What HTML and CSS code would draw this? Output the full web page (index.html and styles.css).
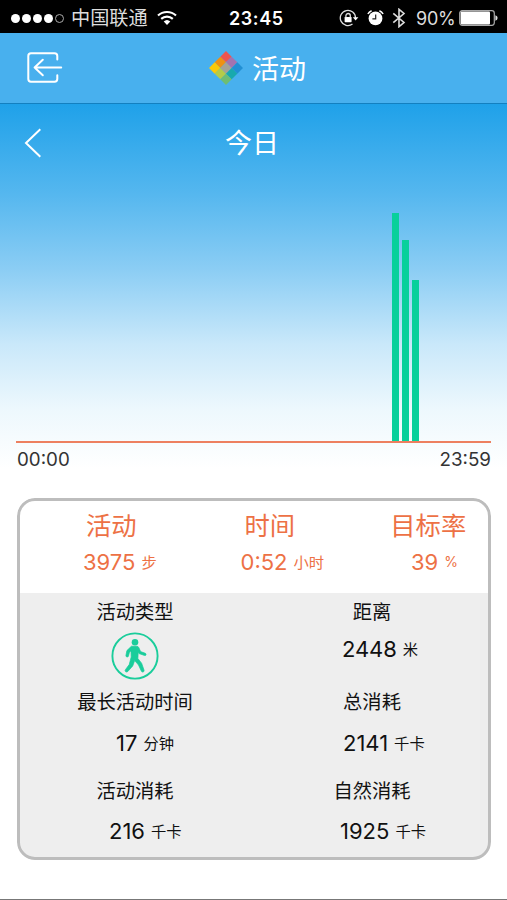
FILE: index.html
```html
<!DOCTYPE html>
<html lang="zh-CN">
<head>
<meta charset="utf-8">
<title>活动</title>
<link rel="stylesheet" href="styles.css">
</head>
<body>
<div class="screen">
  <header class="status">
    <div class="carrier">
      <div class="dots"><i></i><i></i><i></i><i></i><i class="empty"></i></div>
      <span class="carrier-name">中国联通</span>
      <svg class="wifi" width="20" height="16" viewBox="0 0 20 16" fill="none" stroke="#fff" stroke-width="2.1">
        <path d="M1 5.6A13 13 0 0 1 19 5.6M4.2 8.9A8.6 8.6 0 0 1 15.8 8.9"/>
        <path d="M6.7 11.5A4.8 4.8 0 0 1 13.3 11.5L10 15Z" fill="#fff" stroke="none"/>
      </svg>
    </div>
    <span class="clock">23:45</span>
    <div class="indicators">
      <svg width="20" height="18" viewBox="0 0 20 18" fill="none" stroke="#ddd" stroke-width="1.3">
        <path d="M16.5 9A7.6 7.6 0 1 0 13.5 15"/>
        <path d="M13.8 8.3H19.4L16.6 11.4Z" fill="#fff" stroke="none"/>
        <rect x="5.6" y="8" width="7" height="5.2" rx=".6" fill="#fff" stroke="none"/>
        <path d="M6.9 8.5V6.7a2.2 2.2 0 0 1 4.4 0V8.5"/>
      </svg>
      <svg class="alarm" width="17" height="18" viewBox="0 0 17 18" fill="none" stroke="#fff">
        <circle cx="8.5" cy="9.4" r="6.9" fill="#fff" stroke="none"/>
        <path d="M.9 5A7 7 0 0 1 4.6 1.7M16.1 5A7 7 0 0 0 12.4 1.7" stroke-width="1.5"/>
        <path d="M8.7 5.5V9.8H5.4" stroke="#222" stroke-width="1.2"/>
      </svg>
      <svg class="bluetooth" width="14" height="20" viewBox="0 0 14 20" fill="none" stroke="#ddd" stroke-width="1.6">
        <path d="M1.3 5.3L12 14.5L7 18.7V1.3L12 5.5L1.3 14.7"/>
      </svg>
      <span class="percent">90%</span>
      <svg class="battery" width="39" height="16" viewBox="0 0 39 16">
        <rect x=".7" y=".7" width="34.6" height="14.6" rx="2.5" fill="none" stroke="#aaa" stroke-width="1.2"/>
        <rect x="1.6" y="1.6" width="29.4" height="12.8" rx="1" fill="#fff"/>
        <path d="M36.4 5.2Q38.6 6 38.6 8T36.4 10.8Z" fill="#ddd"/>
      </svg>
    </div>
  </header>

  <nav class="navbar">
    <svg class="exit" width="36" height="32" viewBox="0 0 36 32" fill="none" stroke="#fff" stroke-width="2" stroke-linecap="round" stroke-linejoin="round">
      <path d="M30.3 7.6V4Q30.3 1.3 27.5 1.3H4Q1.3 1.3 1.3 4V27Q1.3 29.7 4 29.7H27.5Q30.3 29.7 30.3 27V23.3"/>
      <path d="M34.2 15.5H7.6M15.8 7.8L7.6 15.5L15.8 23.2"/>
    </svg>
    <svg class="logo" width="34" height="34" viewBox="0 0 34 34">
      <g transform="translate(17 0) rotate(45)">
        <rect width="8" height="8" fill="#ed5550"/>
        <rect x="8" width="8" height="8" fill="#a273b0"/>
        <rect x="16" width="8" height="8" fill="#218fd3"/>
        <rect y="8" width="8" height="8" fill="#ef9112"/>
        <rect x="8" y="8" width="8" height="8" fill="#a5a295"/>
        <rect x="16" y="8" width="8" height="8" fill="#18a9ae"/>
        <rect y="16" width="8" height="8" fill="#fbc908"/>
        <rect x="8" y="16" width="8" height="8" fill="#b5cb48"/>
        <rect x="16" y="16" width="8" height="8" fill="#6ebd73"/>
      </g>
    </svg>
    <h1 class="title">活动</h1>
  </nav>

  <section class="chart">
    <div class="day">
      <svg class="prev" width="18" height="30" viewBox="0 0 18 30" fill="none" stroke="#fff" stroke-width="2"><path d="M16.3 1.3L2 15L16.3 28.7"/></svg>
      <h2 class="title">今日</h2>
    </div>
    <div class="plot">
      <div class="bar" style="height:228px"></div>
      <div class="bar" style="height:201px"></div>
      <div class="bar" style="height:161px"></div>
    </div>
    <div class="axis"><span>00:00</span><span>23:59</span></div>
  </section>

  <main class="card">
    <div class="summary">
      <div class="metric">
        <div class="name">活动</div>
        <div class="value steps"><span class="num">3975</span><span class="unit">步</span></div>
      </div>
      <div class="metric">
        <div class="name">时间</div>
        <div class="value time"><span class="num">0:52</span><span class="unit">小时</span></div>
      </div>
      <div class="metric">
        <div class="name">目标率</div>
        <div class="value goal"><span class="num">39</span><span class="unit sign">%</span></div>
      </div>
    </div>
    <div class="details">
      <div class="cell">
        <div class="label">活动类型</div>
        <svg class="walk" width="48" height="48" viewBox="0 0 48 48" fill="#1acd9b">
          <circle cx="24" cy="24" r="22.6" fill="none" stroke="#1acd9b" stroke-width="1.9"/>
          <circle cx="24" cy="10.2" r="3.3"/>
          <path stroke="#1acd9b" stroke-width=".7" d="M20.4 14.2H25.8Q27.2 14.2 27.8 15.6L29.6 19.6L34.4 21.3Q35.5 21.9 35 22.9Q34.5 23.8 33.4 23.4L28 21.6L27.2 20.2L26.9 26.5L30.6 31.2L33.1 38.3Q33.2 39.9 31.9 40.1Q30.8 40.2 30.3 39.1L27.5 33L23.7 28.6L21.7 34L16.8 39.5Q15.7 40.5 14.5 39.6Q13.7 38.7 14.4 37.7L18.2 32.6L20.2 25L20 18.8L18.4 20.4L17.4 24.3Q17 25.2 16 25Q14.8 24.7 14.9 23.6L15.9 18.6Z"/>
        </svg>
      </div>
      <div class="cell">
        <div class="label">距离</div>
        <div class="value distance"><span class="num">2448</span><span class="unit">米</span></div>
      </div>
      <div class="cell">
        <div class="label">最长活动时间</div>
        <div class="value longest"><span class="num">17</span><span class="unit">分钟</span></div>
      </div>
      <div class="cell">
        <div class="label">总消耗</div>
        <div class="value total"><span class="num">2141</span><span class="unit">千卡</span></div>
      </div>
      <div class="cell">
        <div class="label">活动消耗</div>
        <div class="value active"><span class="num">216</span><span class="unit">千卡</span></div>
      </div>
      <div class="cell">
        <div class="label">自然消耗</div>
        <div class="value natural"><span class="num">1925</span><span class="unit">千卡</span></div>
      </div>
    </div>
  </main>
</div>
</body>
</html>
```
FILE: styles.css
```css
* { box-sizing: border-box; }
body { margin: 0; }
h1, h2 { margin: 0; }
svg { display: block; flex: none; }

.screen {
  display: flex;
  flex-direction: column;
  width: 507px;
  height: 900px;
  overflow: hidden;
  background: #fff;
  border-bottom: 1px solid #777;
  font-family: Inter, "Noto Sans CJK SC", sans-serif;
  color: #111;
  white-space: nowrap;
}

.status {
  display: grid;
  grid-template-columns: 229px 56px 1fr;
  align-items: center;
  height: 33px;
  padding-top: 3px;
  background: #000;
  color: #fff;
}
.carrier { display: flex; align-items: center; padding-left: 11px; }
.dots { display: flex; gap: 2px; width: 60px; }
.dots i { width: 9px; height: 9px; border-radius: 50%; background: #fff; }
.dots .empty { background: none; border: 1px solid #aaa; }
.carrier-name { width: 78px; font-size: 19.2px; line-height: 28px; color: #ddd; }
.wifi { margin-left: 8px; }
.clock { font-size: 18px; font-weight: 600; letter-spacing: .6px; }
.indicators { display: flex; align-items: center; padding-left: 54px; }
.alarm { margin-left: 8px; }
.bluetooth { margin-left: 8px; }
.percent { width: 42px; margin-left: 10px; font-size: 18px; letter-spacing: -.2px; color: #ddd; }
.battery { margin-left: 1px; }

.navbar {
  display: flex;
  align-items: center;
  height: 71px;
  padding-left: 27px;
  background: #48b0ee;
  border-bottom: 1px solid #1380c0;
}
.logo { margin-left: 146px; }
.title { padding-top: 3px; font-size: 27px; line-height: 36px; font-weight: 400; color: #fff; }
.navbar .title { margin-left: 9px; }

.chart {
  height: 369px;
  padding: 20px 16px 0;
  background: linear-gradient(#1fa1e9 0, #55b7ef 90px, #8bcdf4 165px, #c9e8fa 240px, #edf8fd 305px, #fff 365px);
}
.day { display: flex; align-items: center; height: 37px; }
.prev { margin-left: 8px; }
.day .title { margin-left: 183px; }
.plot {
  display: flex;
  align-items: flex-end;
  gap: 3px;
  height: 282px;
  padding-left: 376px;
  border-bottom: 2px solid #ed8060;
}
.bar { width: 7px; background: #08d09b; }
.axis {
  display: flex;
  justify-content: space-between;
  padding: 1px 0 0 1px;
  font-size: 18.8px;
  line-height: 32px;
  color: #333;
}

.card {
  position: relative;
  width: 474px;
  height: 362px;
  margin: 25px 0 0 17px;
  border-radius: 18px;
  overflow: hidden;
}
.card::after {
  content: "";
  position: absolute;
  inset: 0;
  border: 3px solid #bdbdbd;
  border-radius: 18px;
}
.summary {
  display: grid;
  grid-template-columns: repeat(3, 158.5px);
  height: 95px;
  padding: 10px 0 0 15px;
  color: #ed7145;
}
.name { font-size: 25.3px; line-height: 36px; text-align: center; }
.value { display: flex; align-items: center; font-size: 22px; line-height: 36px; }
.unit { margin-left: 6px; padding-top: 2px; font-size: 15.3px; line-height: 34px; }
.sign { padding-top: 0; font-size: 14px; }
.steps { padding-left: 51px; }
.time { padding-left: 50px; }
.goal { padding-left: 62px; }

.details {
  display: grid;
  grid-template-columns: 236px 238px;
  grid-template-rows: 90px 89px 88px;
  background: #eee;
}
.label { font-size: 19.3px; line-height: 38px; text-align: center; }
.walk { margin: 1px auto 0; }
.distance { padding-left: 89px; letter-spacing: -.1px; }
.longest { padding: 4px 0 0 99px; }
.total { padding: 4px 0 0 90px; }
.active { padding: 3px 0 0 92px; }
.natural { padding: 3px 0 0 87px; }
```
